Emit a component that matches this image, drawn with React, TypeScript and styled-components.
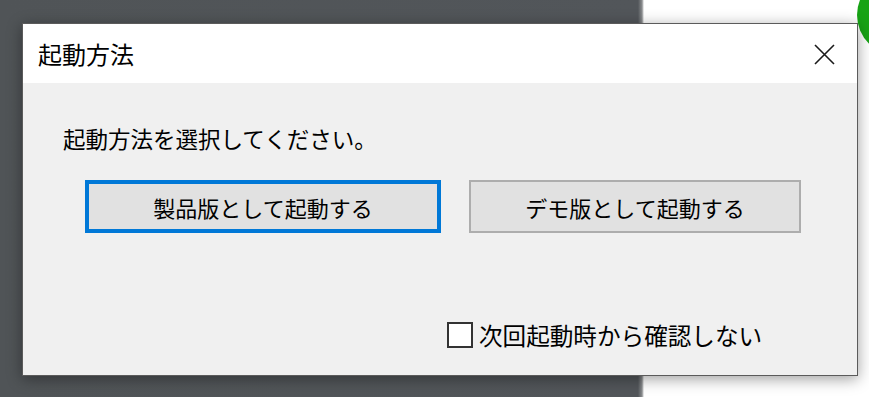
import React, { FC, useState } from "react";
import styled, { createGlobalStyle } from "styled-components";

const GlobalStyle = createGlobalStyle`
  html, body {
    margin: 0;
    padding: 0;
    overflow: hidden;
  }
  body {
    font-family: "Noto Sans CJK JP", "Noto Sans", sans-serif;
  }
`;

const Desktop = styled.div`
  position: relative;
  width: 869px;
  height: 397px;
  overflow: hidden;
  background: linear-gradient(
    to right,
    #505457 0,
    #52565a 638px,
    #8a8c8e 642px,
    #ffffff 644px
  );
`;

const GreenBadge = styled.div`
  position: absolute;
  left: 857px;
  top: -26px;
  width: 84px;
  height: 82px;
  border-radius: 50%;
  background: #17a315;
`;

const Window = styled.div`
  position: absolute;
  left: 22px;
  top: 23px;
  width: 834px;
  height: 351px;
  border: 1px solid #5b5b5b;
  background: #f0f0f0;
  box-shadow: 0 3px 14px rgba(0, 0, 0, 0.38);
  display: flex;
  flex-direction: column;
`;

const TitleBar = styled.div`
  height: 59px;
  flex-shrink: 0;
  background: #ffffff;
  display: flex;
  align-items: center;
  justify-content: space-between;
  padding: 0 22px 0 15px;
`;

const Title = styled.span`
  font-size: 24px;
  line-height: 30px;
  color: #000;
`;

const CloseButton = styled.button`
  width: 21px;
  height: 21px;
  padding: 0;
  border: none;
  background: transparent;
  display: flex;
  align-items: center;
  justify-content: center;
  cursor: pointer;
  margin-top: 2px;
`;

const Body = styled.div`
  flex: 1;
  display: flex;
  flex-direction: column;
`;

const Message = styled.div`
  margin-top: 40px;
  padding-left: 40px;
  font-size: 22.5px;
  line-height: 30px;
  color: #000;
`;

const ButtonRow = styled.div`
  margin-top: 27px;
  padding-left: 62px;
  display: flex;
  gap: 28px;
`;

const LaunchButton = styled.button<{ $focused?: boolean; $width: number }>`
  box-sizing: border-box;
  width: ${p => p.$width}px;
  height: 53px;
  background: #e1e1e1;
  border: ${p => (p.$focused ? "4px solid #0078d7" : "2px solid #adadad")};
  font-family: "Noto Sans CJK JP", "Noto Sans", sans-serif;
  font-size: 22px;
  color: #000;
  padding: 0;
  cursor: pointer;
`;

const CheckRow = styled.label`
  margin-top: 87px;
  padding-left: 424px;
  display: flex;
  align-items: center;
  gap: 6px;
  font-size: 23.6px;
  line-height: 30px;
  color: #000;
  cursor: pointer;
`;

const Box = styled.span<{ $checked: boolean }>`
  box-sizing: border-box;
  width: 26px;
  height: 26px;
  border: 2px solid #333333;
  background: #ffffff;
  display: flex;
  align-items: center;
  justify-content: center;
`;

const App: FC = () => {
  const [checked, setChecked] = useState(false);

  return (
    <>
      <GlobalStyle />
      <Desktop>
        <GreenBadge />
        <Window>
          <TitleBar>
            <Title>起動方法</Title>
            <CloseButton aria-label="閉じる">
              <svg width="21" height="21" viewBox="0 0 21 21">
                <path
                  d="M1 1 L20 20 M20 1 L1 20"
                  stroke="#1a1a1a"
                  strokeWidth="1.6"
                  fill="none"
                />
              </svg>
            </CloseButton>
          </TitleBar>
          <Body>
            <Message>起動方法を選択してください。</Message>
            <ButtonRow>
              <LaunchButton $focused $width={356}>
                製品版として起動する
              </LaunchButton>
              <LaunchButton $width={332}>デモ版として起動する</LaunchButton>
            </ButtonRow>
            <CheckRow onClick={() => setChecked(!checked)}>
              <Box $checked={checked}>
                {checked && (
                  <svg width="16" height="16" viewBox="0 0 16 16">
                    <path
                      d="M2 8 L6 12 L14 3"
                      stroke="#000"
                      strokeWidth="2"
                      fill="none"
                    />
                  </svg>
                )}
              </Box>
              次回起動時から確認しない
            </CheckRow>
          </Body>
        </Window>
      </Desktop>
    </>
  );
};

export default App;
